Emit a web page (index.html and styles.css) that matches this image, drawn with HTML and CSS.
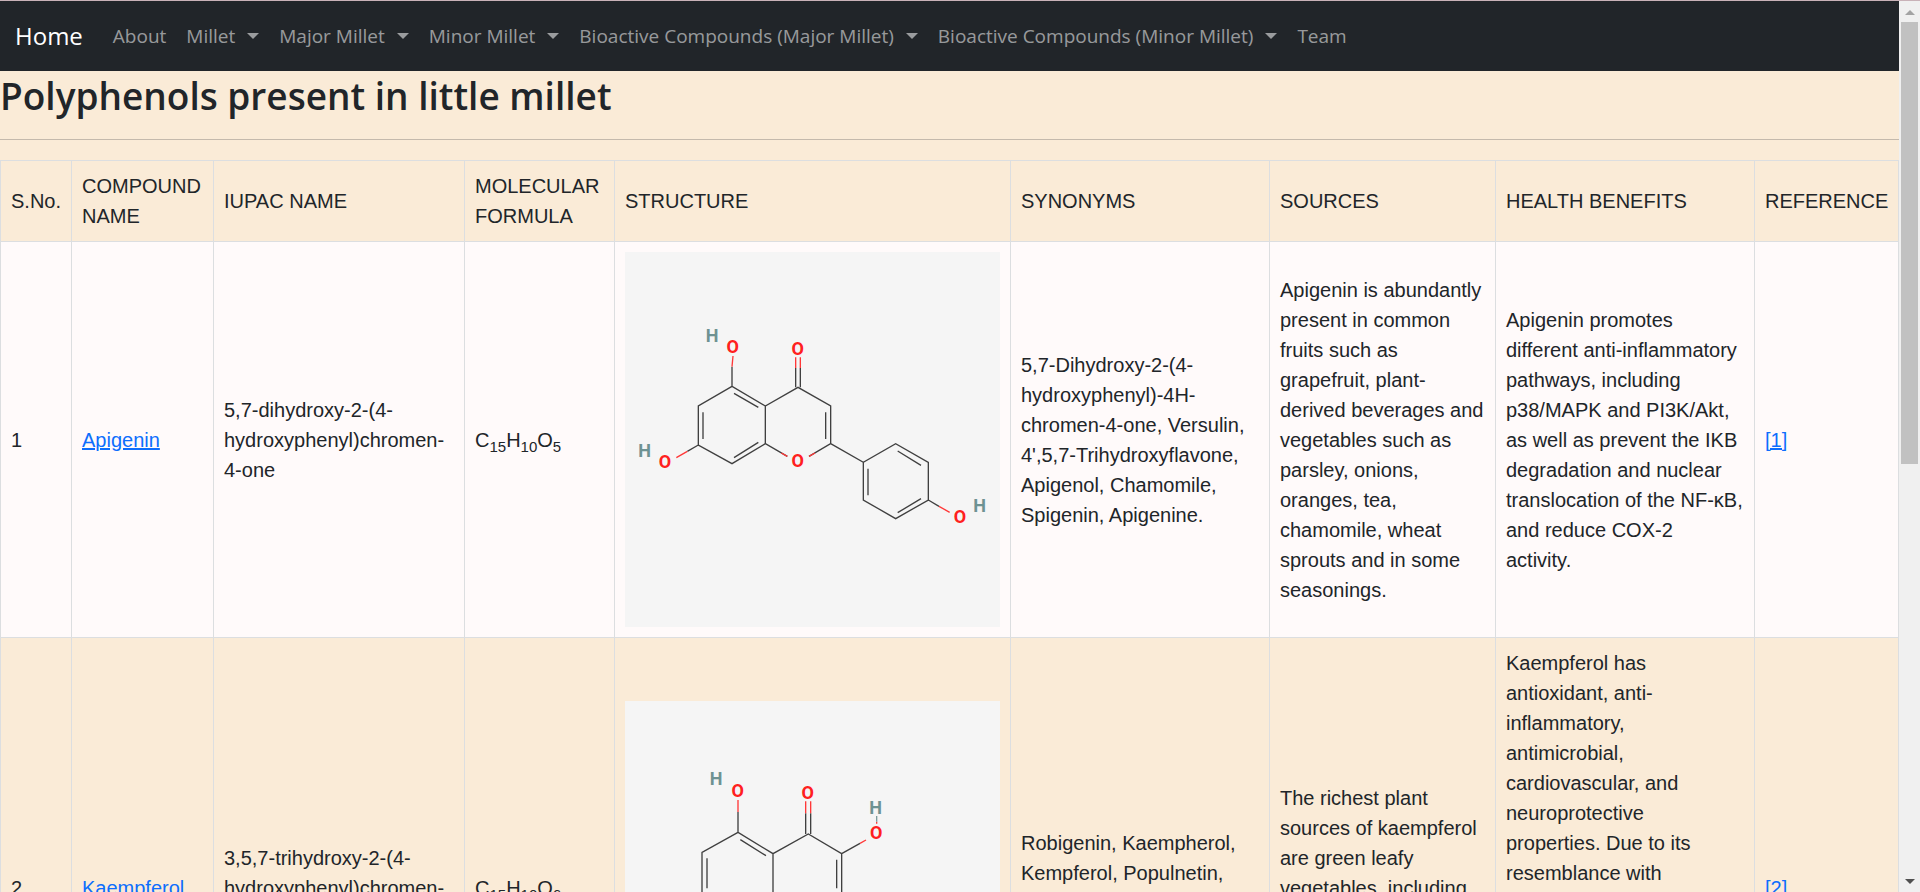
FILE: index.html
```html
<!DOCTYPE html>
<html lang="en">
<head>
<meta charset="utf-8">
<title>Polyphenols present in little millet</title>
<link rel="stylesheet" href="styles.css">
</head>
<body>
<div class="window">
  <div class="page">
    <nav class="navbar">
      <a class="brand" href="#">Home</a>
      <ul class="nav-list">
        <li><a class="nav-link" href="#">About</a></li>
        <li><a class="nav-link dropdown" href="#">Millet</a></li>
        <li><a class="nav-link dropdown" href="#">Major Millet</a></li>
        <li><a class="nav-link dropdown" href="#">Minor Millet</a></li>
        <li><a class="nav-link dropdown" href="#">Bioactive Compounds (Major Millet)</a></li>
        <li><a class="nav-link dropdown" href="#">Bioactive Compounds (Minor Millet)</a></li>
        <li><a class="nav-link" href="#">Team</a></li>
      </ul>
    </nav>
    <main>
      <h1 class="title">Polyphenols present in little millet</h1>
      <hr class="rule">
      <table class="compounds">
        <colgroup>
          <col class="c-no"><col class="c-name"><col class="c-iupac"><col class="c-formula"><col class="c-structure"><col class="c-syn"><col class="c-src"><col class="c-health"><col class="c-ref">
        </colgroup>
        <thead>
          <tr>
            <th>S.No.</th><th>COMPOUND NAME</th><th>IUPAC NAME</th><th>MOLECULAR FORMULA</th><th>STRUCTURE</th><th>SYNONYMS</th><th>SOURCES</th><th>HEALTH BENEFITS</th><th>REFERENCE</th>
          </tr>
        </thead>
        <tbody>
          <tr class="light">
            <td>1</td>
            <td><a href="#">Apigenin</a></td>
            <td>5,7-dihydroxy-2-(4-hydroxyphenyl)chromen-4-one</td>
            <td>C<sub>15</sub>H<sub>10</sub>O<sub>5</sub></td>
            <td>
              <svg class="molecule" viewBox="15 36 1125 1125" role="img" aria-label="Structure of apigenin">
                <path class="bond" d="M336 380V439L436 498L534 442L632 498V611L567 649M502 649L436 611V498M336 439L235 498V615L336 671L436 611M342 460L415 502M249 517V597M342 653L415 607M617 517V597M527 442V384M541 442V384M235 615L202 634M632 611L730 667L827 611L925 667V780L827 836L730 780V667M744 686V766M833 633L903 676M833 818L903 776M925 780L957 799"/>
                <path class="bond-o" d="M336 380L339 348M527 384V352M541 384V352M202 634L169 653M502 649L484 639M567 649L585 639M957 799L989 817"/>
                <g class="oxygen"><text x="338" y="340">O</text><text x="533" y="344">O</text><text x="533" y="682">O</text><text x="135" y="685">O</text><text x="1020" y="850">O</text></g>
                <g class="hydrogen"><text x="276" y="306">H</text><text x="74" y="652">H</text><text x="1079" y="817">H</text></g>
              </svg>
            </td>
            <td>5,7-Dihydroxy-2-(4-hydroxyphenyl)-4H-chromen-4-one, Versulin, 4',5,7-Trihydroxyflavone, Apigenol, Chamomile, Spigenin, Apigenine.</td>
            <td>Apigenin is abundantly present in common fruits such as grapefruit, plant-derived beverages and vegetables such as parsley, onions, oranges, tea, chamomile, wheat sprouts and in some seasonings.</td>
            <td>Apigenin promotes different anti-inflammatory pathways, including p38/MAPK and PI3K/Akt, as well as prevent the IKB degradation and nuclear translocation of the NF-κB, and reduce COX-2<br>activity.</td>
            <td><a href="#">[1]</a></td>
          </tr>
          <tr>
            <td>2</td>
            <td><a href="#">Kaempferol</a></td>
            <td>3,5,7-trihydroxy-2-(4-hydroxyphenyl)chromen-4-one</td>
            <td>C<sub>15</sub>H<sub>10</sub>O<sub>6</sub></td>
            <td>
              <svg class="molecule" viewBox="15 243 1125 1125" role="img" aria-label="Structure of kaempferol">
                <path class="bond" d="M354 576V637L459 701L565 642L665 701V822L598 861M528 861L459 822V701M354 637L246 697V822L354 883L459 822M361 659L438 707M261 715V805M361 864L438 818M650 719V805M557 642V580M572 642V580M665 701L720 670M246 822L210 843M665 822L770 883L875 822L980 883V1004L875 1065L770 1004V883M785 902V986M882 845L957 890M882 1042L957 998"/>
                <path class="bond-o" d="M354 576V540M557 580V544M572 580V544M720 670L738 660M770 605V611M528 861L510 851M598 861L616 851"/>
                <path class="bond-h" d="M770 588V605"/>
                <g class="oxygen"><text x="353" y="532">O</text><text x="563" y="536">O</text><text x="769" y="656">O</text><text x="563" y="899">O</text><text x="145" y="899">O</text></g>
                <g class="hydrogen"><text x="288" y="494">H</text><text x="767" y="581">H</text></g>
              </svg>
            </td>
            <td>Robigenin, Kaempherol, Kempferol, Populnetin, Rhamnolutein, Trifolitin, Swartziol.</td>
            <td>The richest plant sources of kaempferol are green leafy vegetables, including spinach and kale, and herbs such as dill, chives and tarragon.</td>
            <td>Kaempferol has antioxidant, anti-inflammatory, antimicrobial, cardiovascular, and neuroprotective<br>properties. Due to its resemblance with<br>estrogen, it binds to<br>estrogen receptors and<br>shows estrogenic activity.<br>It also helps to reduce<br>the risk of cancer and<br>supports the healthy<br>function of the liver<br>and of the heart.</td>
            <td><a href="#">[2]</a></td>
          </tr>
        </tbody>
      </table>
    </main>
  </div>
  <div class="scrollbar" aria-hidden="true">
    <svg class="arrow up" viewBox="0 0 10 5"><path d="M5 0L10 5H0Z"/></svg>
    <div class="track"><div class="thumb"></div></div>
    <svg class="arrow down" viewBox="0 0 10 5"><path d="M0 0H10L5 5Z"/></svg>
  </div>
</div>
</body>
</html>
```
FILE: styles.css
```css
* {
  box-sizing: border-box;
}

body {
  margin: 0;
  background: #faebd7;
  color: #212529;
  font-family: "Liberation Sans", Arial, sans-serif;
  font-size: 20px;
  line-height: 30px;
}

.window {
  display: grid;
  grid-template-columns: minmax(0, 1fr) 21px;
  height: 100vh;
  overflow: hidden;
  border-top: 1px solid #c9b2b8;
}

.page {
  min-height: 0;
  overflow: hidden;
}

.navbar {
  display: flex;
  align-items: center;
  gap: 20px;
  padding: 10px 15px;
  background: #212529;
  font-family: "Segoe UI", "Open Sans", "Noto Sans", sans-serif;
}

.brand {
  color: #fff;
  font-size: 24px;
  text-decoration: none;
}

.nav-list {
  display: flex;
  margin: 0;
  padding: 0;
  list-style: none;
}

.nav-link {
  display: flex;
  align-items: center;
  gap: 12px;
  padding: 10px;
  color: rgba(255, 255, 255, 0.55);
  font-size: 19px;
  text-decoration: none;
  white-space: nowrap;
}

.dropdown::after {
  content: "";
  border: 6px solid transparent;
  border-top-color: currentColor;
  border-bottom: 0;
}

.title {
  margin: 0;
  padding: 1px 0 19px;
  font-family: "Segoe UI", "Open Sans", "Noto Sans", sans-serif;
  font-size: 37px;
  font-weight: 600;
  line-height: 48px;
}

.rule {
  height: 1px;
  margin: 0 0 20px;
  border: 0;
  background: #c4b9ac;
}

.compounds {
  width: 100%;
  table-layout: fixed;
  border-collapse: collapse;
}

.c-no { width: 71px; }
.c-name { width: 142px; }
.c-iupac { width: 251px; }
.c-formula { width: 150px; }
.c-structure { width: 396px; }
.c-syn { width: 259px; }
.c-src { width: 226px; }
.c-health { width: 259px; }
.c-ref { width: 144px; }

.compounds th,
.compounds td {
  padding: 10px;
  border: 1px solid #dcdee0;
  font-weight: 400;
  text-align: left;
  vertical-align: middle;
}

.light {
  background: #fffafa;
}

.compounds a {
  color: #0d6efd;
}

.compounds sub {
  position: relative;
  bottom: -5px;
  font-size: 15px;
  line-height: 0;
  vertical-align: baseline;
}

.molecule {
  display: block;
  width: 100%;
  aspect-ratio: 1;
  background: #f5f5f5;
  font-family: Roboto, sans-serif;
  font-size: 54px;
  font-weight: 700;
  text-anchor: middle;
}

.bond,
.bond-o,
.bond-h {
  fill: none;
  stroke: #404040;
  stroke-width: 4;
}

.bond-o {
  stroke: #ff3838;
}

.bond-h {
  stroke: #7c9c9c;
}

.oxygen {
  fill: #ff2020;
}

.hydrogen {
  fill: #6e9292;
}

.scrollbar {
  display: flex;
  flex-direction: column;
  align-items: center;
  padding: 9px 0 8px;
  background: #f0f0f0;
}

.arrow {
  width: 10px;
  height: 5px;
}

.up {
  fill: #a3a3a3;
}

.down {
  fill: #505050;
}

.track {
  flex: 1;
  width: 17px;
  padding: 7px 0;
}

.thumb {
  height: 52%;
  background: #c1c1c1;
}
```
